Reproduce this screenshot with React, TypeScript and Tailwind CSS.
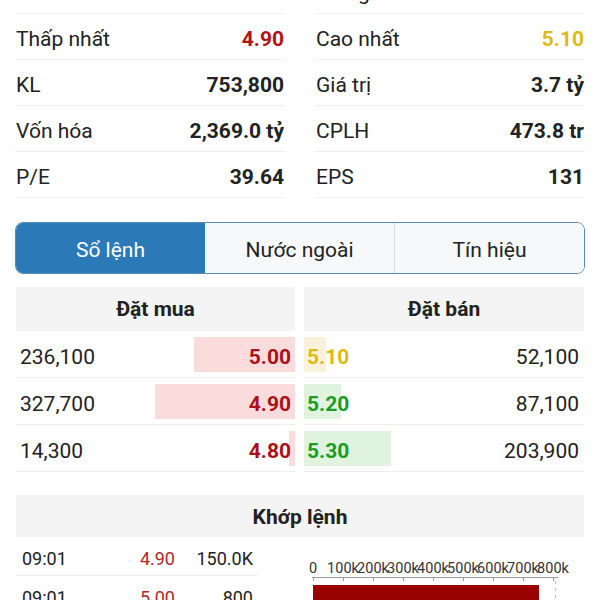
import React from 'react';

type Stat = { label: string; value: string; tone?: 'red' | 'yellow' };

const leftStats: Stat[] = [
  { label: 'Mở cửa', value: '5.00', tone: 'yellow' },
  { label: 'Thấp nhất', value: '4.90', tone: 'red' },
  { label: 'KL', value: '753,800' },
  { label: 'Vốn hóa', value: '2,369.0 tỷ' },
  { label: 'P/E', value: '39.64' },
];

const rightStats: Stat[] = [
  { label: 'Trung bình', value: '5.00', tone: 'yellow' },
  { label: 'Cao nhất', value: '5.10', tone: 'yellow' },
  { label: 'Giá trị', value: '3.7 tỷ' },
  { label: 'CPLH', value: '473.8 tr' },
  { label: 'EPS', value: '131' },
];

const bids = [
  { vol: '236,100', price: '5.00', bar: 101 },
  { vol: '327,700', price: '4.90', bar: 140 },
  { vol: '14,300', price: '4.80', bar: 6 },
];

const asks = [
  { vol: '52,100', price: '5.10', bar: 22, tone: 'yellow' },
  { vol: '87,100', price: '5.20', bar: 37, tone: 'green' },
  { vol: '203,900', price: '5.30', bar: 87, tone: 'green' },
];

const matches = [
  { time: '09:01', price: '4.90', vol: '150.0K' },
  { time: '09:01', price: '5.00', vol: '800' },
];

function StatColumn({ items }: { items: Stat[] }) {
  return (
    <div className="flex flex-col">
      {items.map((s, i) => (
        <div key={i} className="h-[46px] pt-[5px] flex items-center justify-between border-b border-[#eeeeee] px-px">
          <span className="text-[#222222]">{s.label}</span>
          <span
            className={`font-bold ${
              s.tone === 'red' ? 'text-[#b3141c]' : s.tone === 'yellow' ? 'text-[#dcbc14]' : 'text-[#222222]'
            }`}
          >
            {s.value}
          </span>
        </div>
      ))}
    </div>
  );
}

function VolumeChart() {
  const labels = ['0', '100k', '200k', '300k', '400k', '500k', '600k', '700k', '800k'];
  return (
    <svg width="284" height="63" viewBox="0 0 284 63" className="block">
      {labels.map((l, i) => (
        <text key={l} x={13 + 30 * i} y={36} textAnchor="middle" fontSize="14.5" fill="#333" fontFamily="Roboto, sans-serif">
          {l}
        </text>
      ))}
      <line x1={12} y1={40.5} x2={258} y2={40.5} stroke="#9a9a9a" strokeWidth={1} />
      {labels.map((l, i) => (
        <line key={l} x1={13.5 + 30 * i} y1={40} x2={13.5 + 30 * i} y2={44} stroke="#9a9a9a" strokeWidth={1} />
      ))}
      <line x1={255.5} y1={44} x2={255.5} y2={63} stroke="#bbbbbb" strokeWidth={1} strokeDasharray="3 4" />
      <rect x={13} y={48} width={226} height={20} fill="#990000" />
    </svg>
  );
}

export default function App() {
  return (
    <div className="w-[600px] h-[600px] overflow-hidden bg-white font-['Roboto',sans-serif] text-[21px] leading-none">
      {/* thong ke */}
      <div className="mt-[-32px] px-[15px] grid grid-cols-2 gap-x-[30px]">
        <StatColumn items={leftStats} />
        <StatColumn items={rightStats} />
      </div>

      {/* tabs */}
      <div className="mt-[24px] mx-[15px] h-[52px] flex rounded-lg border border-[#5a8cb2] overflow-hidden">
        <div className="w-[189px] pt-[4px] flex items-center justify-center bg-[#2b7ab7] text-white">Sổ lệnh</div>
        <div className="w-[190px] pt-[4px] flex items-center justify-center bg-[#f6f8fa] text-[#222222] border-r border-[#d5dce2]">
          Nước ngoài
        </div>
        <div className="flex-1 pt-[4px] flex items-center justify-center bg-[#f6f8fa] text-[#222222]">Tín hiệu</div>
      </div>

      {/* so lenh */}
      <div className="mt-[13px] mx-[16px] grid grid-cols-[279px_280px] gap-x-[9px]">
        <div>
          <div className="h-[44px] flex items-center justify-center bg-[#f4f4f4] font-bold text-[#222222]">Đặt mua</div>
          {bids.map((b, i) => (
            <div key={i} className="relative h-[47px] pt-[7px] flex items-center justify-between border-b border-[#eeeeee]">
              <div className="absolute right-0 top-[6px] h-[35px] bg-[#fbdcdc]" style={{ width: b.bar }} />
              <span className="relative pl-[4px] text-[#222222]">{b.vol}</span>
              <span className="relative pr-[4px] font-bold text-[#a8121a]">{b.price}</span>
            </div>
          ))}
        </div>
        <div>
          <div className="h-[44px] flex items-center justify-center bg-[#f4f4f4] font-bold text-[#222222]">Đặt bán</div>
          {asks.map((a, i) => (
            <div key={i} className="relative h-[47px] pt-[7px] flex items-center justify-between border-b border-[#eeeeee]">
              <div
                className={`absolute left-0 top-[6px] h-[35px] ${a.tone === 'yellow' ? 'bg-[#faf1da]' : 'bg-[#dff3df]'}`}
                style={{ width: a.bar }}
              />
              <span className={`relative pl-[3px] font-bold ${a.tone === 'yellow' ? 'text-[#dcbc14]' : 'text-[#1c9c24]'}`}>
                {a.price}
              </span>
              <span className="relative pr-[5px] text-[#222222]">{a.vol}</span>
            </div>
          ))}
        </div>
      </div>

      {/* khop lenh */}
      <div className="mt-[23px] mx-[16px] h-[42px] pt-[2px] flex items-center justify-center bg-[#f4f4f4] font-bold text-[#222222]">
        Khớp lệnh
      </div>
      <div className="mx-[16px] flex">
        <div className="w-[242px] text-[18px]">
          {matches.map((m, i) => (
            <div key={i} className="h-[39px] pt-[5px] flex items-center border-b border-[#eeeeee]">
              <span className="w-[100px] pl-[6px] text-[#222222]">{m.time}</span>
              <span className="w-[59px] text-right text-[#b3262c]">{m.price}</span>
              <span className="w-[78px] text-right text-[#222222]">{m.vol}</span>
            </div>
          ))}
        </div>
        <div className="ml-[42px]">
          <VolumeChart />
        </div>
      </div>
    </div>
  );
}
